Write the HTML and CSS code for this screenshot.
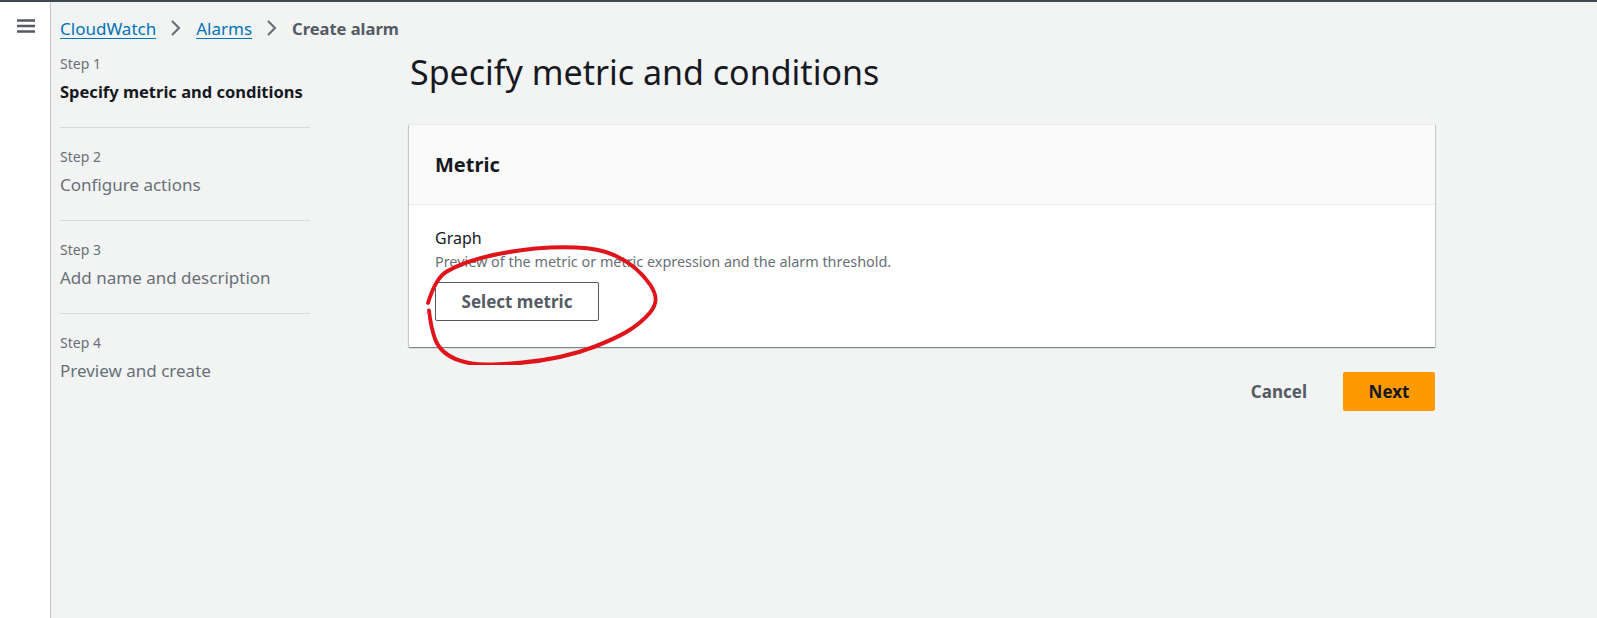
FILE: index.html
```html
<!DOCTYPE html>
<html lang="en">
<head>
<meta charset="utf-8">
<title>Create alarm</title>
<link rel="stylesheet" href="styles.css">
</head>
<body>
<div class="topline"></div>
<div class="app">
  <nav class="rail">
    <button class="menu" aria-label="Open navigation">
      <svg width="18" height="14" viewBox="0 0 18 14"><path d="M0 1.5h18M0 7h18M0 12.5h18" stroke="#545b64" stroke-width="2.4" fill="none"/></svg>
    </button>
  </nav>
  <div class="main">
    <div class="crumbs">
      <a href="#" class="crumb-link">CloudWatch</a>
      <svg class="chev" width="12" height="18" viewBox="0 0 12 18"><path d="M2 2l7 7-7 7" stroke="#687078" stroke-width="2.2" fill="none"/></svg>
      <a href="#" class="crumb-link">Alarms</a>
      <svg class="chev" width="12" height="18" viewBox="0 0 12 18"><path d="M2 2l7 7-7 7" stroke="#687078" stroke-width="2.2" fill="none"/></svg>
      <span class="crumb-current">Create alarm</span>
    </div>
    <div class="wizard">
      <ul class="steps">
        <li class="step active"><div class="step-num">Step 1</div><div class="step-title">Specify metric and conditions</div></li>
        <li class="step"><div class="step-num">Step 2</div><div class="step-title">Configure actions</div></li>
        <li class="step"><div class="step-num">Step 3</div><div class="step-title">Add name and description</div></li>
        <li class="step"><div class="step-num">Step 4</div><div class="step-title">Preview and create</div></li>
      </ul>
      <div class="content">
        <h1 class="page-title">Specify metric and conditions</h1>
        <section class="card">
          <header class="card-head"><h2>Metric</h2></header>
          <div class="card-body">
            <div class="field-label">Graph</div>
            <div class="field-desc">Preview of the metric or metric expression and the alarm threshold.</div>
            <div class="btn-wrap">
              <button class="btn-normal">Select metric</button>
              <svg class="scribble" width="240" height="122" viewBox="0 0 240 112" preserveAspectRatio="none"><path d="M3 55 C8 40 14 30 22 26 C45 14 80 8 110 5 C140 3 165 4 180 8 C200 14 215 25 225 38 C232 48 233 55 225 64 C212 78 195 86 170 95 C145 104 120 108 95 110 C70 112 50 113 35 108 C22 104 14 98 10 88 C6 78 5 70 4 62" stroke="#e0141b" stroke-width="3.8" fill="none" stroke-linecap="round"/></svg>
            </div>
          </div>
        </section>
        <div class="actions">
          <button class="btn-link">Cancel</button>
          <button class="btn-primary">Next</button>
        </div>
      </div>
    </div>
  </div>
</div>
</body>
</html>
```

FILE: styles.css
```css
* { box-sizing: border-box; }
html, body { margin: 0; padding: 0; }
body {
  font-family: "Noto Sans", "Open Sans", Arial, sans-serif;
  background: #f2f3f3;
  color: #16191f;
  height: 618px;
  overflow: hidden;
}
.topline { height: 2px; background: #414750; }
.app { display: flex; height: 616px; }
.rail {
  width: 51px;
  flex: none;
  background: #fff;
  border-right: 1px solid #c6c6cd;
  display: flex;
  justify-content: center;
  padding-top: 17px;
}
.menu {
  background: none; border: 0; padding: 0; width: 18px; height: 14px;
  margin-left: 1px;
  display: block;
}
.menu svg { display: block; }
.main { flex: 1; padding-left: 9px; }
.crumbs {
  display: flex; align-items: center;
  height: 28px;
  margin-top: 12px;
  font-size: 17px;
}
.crumb-link { color: #0073bb; text-decoration: underline; text-underline-offset: 3px; }
.chev { margin: 0 14px; }
.crumb-current { color: #545b64; font-weight: 700; font-size: 16.5px; }
.wizard { display: grid; grid-template-columns: 250px 1026px; column-gap: 99px; }
.steps { list-style: none; margin: 0; padding: 0; }
.step { border-bottom: 1px solid #d5dbdb; height: 93px; padding-top: 19px; }
.step:first-child { padding-top: 12px; height: 86px; }
.step:last-child { border-bottom: 0; }
.step-num { font-size: 14px; color: #687078; line-height: 20px; }
.step-title { font-size: 17px; color: #687078; line-height: 24px; margin-top: 6px; }
.step.active .step-title { color: #16191f; font-weight: 700; font-size: 16.5px; }
.content { padding-top: 7px; }
.page-title {
  font-size: 34px; font-weight: 400; margin: 0 0 0 1px; line-height: 46px; color: #16191f;
}
.card {
  margin-top: 29px;
  background: #fff;
  box-shadow: 0 1px 1px 0 rgba(0,28,36,.3), 1px 1px 1px 0 rgba(0,28,36,.15), -1px 1px 1px 0 rgba(0,28,36,.15);
  border-top: 1px solid #eaeded;
}
.card-head {
  background: #fafafa;
  border-bottom: 1px solid #eaeded;
  height: 80px;
  display: flex; align-items: center;
  padding-left: 26px;
}
.card-head h2 { margin: 0; font-size: 20px; font-weight: 700; color: #16191f; }
.card-body { padding: 21px 26px 26px; }
.field-label { font-size: 16px; color: #16191f; line-height: 24px; }
.field-desc { font-size: 14.4px; color: #687078; line-height: 22px; margin-top: 1px; }
.btn-wrap { position: relative; margin-top: 9px; }
.btn-normal {
  font-family: inherit;
  width: 164px; height: 39px;
  background: #fff;
  border: 1px solid #545b64;
  border-radius: 2px;
  color: #545b64;
  font-weight: 700;
  font-size: 17px;
  display: block;
}
.scribble { position: absolute; left: -10px; top: -39px; pointer-events: none; }
.actions { display: flex; justify-content: flex-end; align-items: center; margin-top: 25px; }
.btn-link {
  font-family: inherit; background: none; border: 0; color: #545b64; font-weight: 700; font-size: 17px;
  padding: 0; margin-right: 36px;
}
.btn-primary {
  font-family: inherit; width: 92px; height: 39px; background: #ff9900; border: 0; border-radius: 2px;
  color: #16191f; font-weight: 700; font-size: 17px;
}
```
